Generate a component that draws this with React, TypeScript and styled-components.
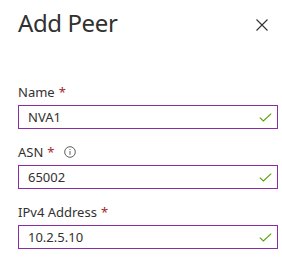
import React, { FC } from "react"
import styled, { createGlobalStyle } from "styled-components"

const GlobalStyle = createGlobalStyle`
  html, body {
    margin: 0;
    padding: 0;
    background: #ffffff;
  }
  body {
    font-family: "Noto Sans", "Open Sans", sans-serif;
    color: #323130;
  }
`

const Blade = styled.div`
  width: 282px;
  height: 263px;
  box-sizing: border-box;
  padding: 7px 4px 0 18px;
  background: #ffffff;
  overflow: hidden;
`

const Header = styled.div`
  display: flex;
  align-items: center;
  justify-content: space-between;
  height: 32px;
`

const Title = styled.h1`
  margin: 0;
  font-size: 24px;
  line-height: 32px;
  font-weight: 400;
  letter-spacing: -0.4px;
  color: #323130;
`

const CloseButton = styled.button`
  width: 32px;
  height: 32px;
  padding: 0;
  border: 0;
  background: transparent;
  display: flex;
  align-items: center;
  justify-content: center;
  cursor: pointer;
  color: #323130;
  margin-top: 3px;
`

const Form = styled.div`
  display: flex;
  flex-direction: column;
  gap: 13px;
  margin-top: 43px;
`

const Field = styled.div`
  display: flex;
  flex-direction: column;
  gap: 3px;
`

const Label = styled.label`
  display: flex;
  align-items: center;
  height: 20px;
  font-size: 13px;
  line-height: 20px;
  color: #323130;
`

const Required = styled.span`
  color: #a4262c;
  margin-left: 4px;
`

const Info = styled.span`
  display: inline-flex;
  margin-left: 9px;
  color: #605e5c;
`

const InputBox = styled.div`
  display: flex;
  align-items: center;
  height: 24px;
  box-sizing: border-box;
  border: 1px solid #8a2da5;
  padding: 0 5px 0 9px;
`

const Value = styled.span`
  flex: 1;
  font-size: 13px;
  line-height: 20px;
  color: #323130;
`

const CheckIcon: FC = () => (
  <svg width="13" height="9" viewBox="0 0 13 9" fill="none">
    <path d="M0.8 4.6 L4.4 8 L12.2 0.6" stroke="#57a300" strokeWidth="1.1" />
  </svg>
)

const InfoIcon: FC = () => (
  <svg width="12" height="12" viewBox="0 0 12 12" fill="none">
    <circle cx="6" cy="6" r="5.3" stroke="currentColor" strokeWidth="1" />
    <rect x="5.5" y="5" width="1" height="3.8" fill="currentColor" />
    <rect x="5.5" y="3" width="1" height="1" fill="currentColor" />
  </svg>
)

const CloseIcon: FC = () => (
  <svg width="12" height="12" viewBox="0 0 12 12" fill="none">
    <path d="M0.5 0.5 L11.5 11.5 M11.5 0.5 L0.5 11.5" stroke="currentColor" strokeWidth="1.1" />
  </svg>
)

type FormFieldProps = {
  label: string
  value: string
  info?: boolean
}

const FormField: FC<FormFieldProps> = ({ label, value, info }) => (
  <Field>
    <Label>
      { label }
      <Required>*</Required>
      { info && <Info><InfoIcon /></Info> }
    </Label>
    <InputBox>
      <Value>{ value }</Value>
      <CheckIcon />
    </InputBox>
  </Field>
)

const App: FC = () => (
  <>
    <GlobalStyle />
    <Blade>
      <Header>
        <Title>Add Peer</Title>
        <CloseButton aria-label="Close"><CloseIcon /></CloseButton>
      </Header>
      <Form>
        <FormField label="Name" value="NVA1" />
        <FormField label="ASN" value="65002" info />
        <FormField label="IPv4 Address" value="10.2.5.10" />
      </Form>
    </Blade>
  </>
)

export default App
